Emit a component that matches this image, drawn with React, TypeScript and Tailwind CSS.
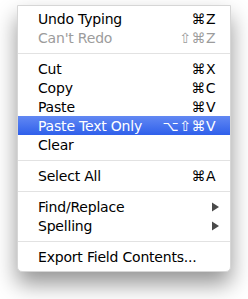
import React from 'react';

type Item =
  | { kind: 'sep' }
  | { kind: 'item'; label: string; keys?: string; disabled?: boolean; active?: boolean; submenu?: boolean };

const items: Item[] = [
  { kind: 'item', label: 'Undo Typing', keys: '⌘Z' },
  { kind: 'item', label: "Can't Redo", keys: '⇧⌘Z', disabled: true },
  { kind: 'sep' },
  { kind: 'item', label: 'Cut', keys: '⌘X' },
  { kind: 'item', label: 'Copy', keys: '⌘C' },
  { kind: 'item', label: 'Paste', keys: '⌘V' },
  { kind: 'item', label: 'Paste Text Only', keys: '⌥⇧⌘V', active: true },
  { kind: 'item', label: 'Clear' },
  { kind: 'sep' },
  { kind: 'item', label: 'Select All', keys: '⌘A' },
  { kind: 'sep' },
  { kind: 'item', label: 'Find/Replace', submenu: true },
  { kind: 'item', label: 'Spelling', submenu: true },
  { kind: 'sep' },
  { kind: 'item', label: 'Export Field Contents...' },
];

const Arrow = () => (
  <svg width="9" height="10" viewBox="0 0 9 10" className="mr-[-4px]">
    <path d="M1 0.5 L8 5 L1 9.5 Z" fill="#4a4a4a" />
  </svg>
);

export default function App() {
  return (
    <div
      className="w-[248px] h-[299px] bg-white overflow-hidden pt-[5px] pl-[17px]"
      style={{ fontFamily: '"DejaVu Sans", "Liberation Sans", sans-serif' }}
    >
      <div className="w-[214px] bg-white border border-[#d6d6d6] rounded-b-[5px] pt-[3px] pb-[5px] shadow-[0_12px_22px_rgba(0,0,0,0.42)]">
        {items.map((it, i) =>
          it.kind === 'sep' ? (
            <div key={i} className="h-[12px] flex items-center">
              <div className="h-px w-full bg-[#e2e2e2]" />
            </div>
          ) : (
            <div
              key={i}
              className={
                'h-[19px] flex items-center justify-between pl-[20px] pr-[14px] text-[14px] tracking-[-0.2px] leading-none ' +
                (it.active
                  ? 'bg-gradient-to-b from-[#6288f3] to-[#2f5fea] text-white'
                  : it.disabled
                  ? 'text-[#9c9c9c]'
                  : 'text-black')
              }
            >
              <span className="pt-[1px]">{it.label}</span>
              {it.keys && <span className="pt-[1px] tracking-[0.5px]">{it.keys}</span>}
              {it.submenu && <Arrow />}
            </div>
          )
        )}
      </div>
    </div>
  );
}
